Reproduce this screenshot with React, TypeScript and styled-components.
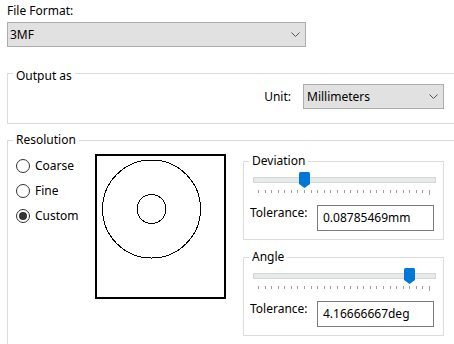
import React from "react";
import styled, { createGlobalStyle } from "styled-components";

const Global = createGlobalStyle`
  html, body { margin: 0; padding: 0; background: #fff; overflow: hidden; }
  body {
    font-family: "Noto Sans", "Open Sans", sans-serif;
    font-size: 12px;
    color: #000;
  }
  * { box-sizing: border-box; }
`;

const Page = styled.div`
  width: 454px;
  height: 344px;
  padding: 3px 0 0 7px;
  display: flex;
  flex-direction: column;
`;

const FieldLabel = styled.div`
  line-height: 16px;
  height: 16px;
`;

const Combo = styled.div<{ $width: number; $top?: number; $padLeft: number }>`
  width: ${(p) => p.$width}px;
  height: 25px;
  margin-top: ${(p) => p.$top ?? 0}px;
  background: #e1e1e1;
  border: 1px solid #adadad;
  display: flex;
  align-items: center;
  justify-content: space-between;
  padding: 0 5px 0 ${(p) => p.$padLeft}px;
  line-height: 16px;
  flex-shrink: 0;
`;

const ComboText = styled.span`
  white-space: nowrap;
`;

const Chevron = () => (
  <svg width="9" height="5" viewBox="0 0 9 5" style={{ display: "block" }}>
    <polyline points="0.5,0.5 4.5,4.5 8.5,0.5" fill="none" stroke="#555" strokeWidth="1" />
  </svg>
);

const ComboBox: React.FC<{ text: string; width: number; top?: number; padLeft: number }> = ({
  text,
  width,
  top,
  padLeft,
}) => (
  <Combo $width={width} $top={top} $padLeft={padLeft}>
    <ComboText>{text}</ComboText>
    <Chevron />
  </Combo>
);

const Group = styled.div<{ $mt?: number; $openRight?: boolean; $openBottom?: boolean; $height?: number }>`
  position: relative;
  margin-top: ${(p) => p.$mt ?? 0}px;
  border: 1px solid #dcdcdc;
  ${(p) => (p.$openRight ? "border-right: none;" : "")}
  ${(p) => (p.$openBottom ? "border-bottom: none;" : "")}
  ${(p) => (p.$height ? `height: ${p.$height}px;` : "")}
  flex-shrink: 0;
`;

const Caption = styled.span<{ $top: number; $left: number }>`
  position: absolute;
  top: ${(p) => p.$top}px;
  left: ${(p) => p.$left}px;
  padding: 0 3px;
  background: #fff;
  line-height: 16px;
  white-space: nowrap;
`;

const UnitRow = styled.div`
  display: flex;
  justify-content: flex-end;
  align-items: center;
  gap: 12px;
  padding: 10px 10px 14px 0;
`;

const ResBody = styled.div`
  display: flex;
  align-items: flex-start;
  padding: 13px 10px 0 8px;
`;

const RadioList = styled.div`
  width: 79px;
  margin-top: -1px;
  display: flex;
  flex-direction: column;
  flex-shrink: 0;
`;

const RadioRow = styled.div`
  height: 25px;
  display: flex;
  align-items: center;
  gap: 5px;
  line-height: 16px;
`;

const RadioCircle = styled.span<{ $checked?: boolean }>`
  width: 14px;
  height: 14px;
  border-radius: 50%;
  border: 1px solid #333;
  background: #fff;
  display: flex;
  align-items: center;
  justify-content: center;
  flex-shrink: 0;
  &::after {
    content: "";
    display: ${(p) => (p.$checked ? "block" : "none")};
    width: 8px;
    height: 8px;
    border-radius: 50%;
    background: #333;
  }
`;

const Preview = styled.div`
  width: 131px;
  height: 145px;
  border: 2px solid #000;
  flex-shrink: 0;
`;

const RightCol = styled.div`
  width: 201px;
  margin-left: 17px;
  margin-top: 7px;
  display: flex;
  flex-direction: column;
  gap: 17px;
  flex-shrink: 0;
`;

const SubGroup = styled.div`
  position: relative;
  border: 1px solid #dcdcdc;
  padding: 10px 0 8px 0;
`;

const SliderBox = styled.div`
  position: relative;
  height: 17px;
  margin: 0 7px 0 9px;
  padding-top: 5px;
`;

const Track = styled.div`
  height: 6px;
  background: #e7eaea;
  border: 1px solid #d6d6d6;
`;

const Thumb = styled.svg<{ $pos: number }>`
  position: absolute;
  top: 0;
  left: ${(p) => p.$pos - 5.5}px;
  display: block;
`;

const Ticks = styled.svg`
  display: block;
  margin: 1px 0 0 9px;
`;

const TolRow = styled.div`
  display: flex;
  justify-content: space-between;
  align-items: flex-start;
  margin-top: 10px;
  padding: 0 9px 0 6px;
`;

const TolLabel = styled.span`
  line-height: 16px;
`;

const TolInput = styled.div`
  width: 117px;
  height: 26px;
  border: 1px solid #7a7a7a;
  background: #fff;
  padding: 0 0 0 5px;
  display: flex;
  align-items: center;
  line-height: 16px;
  white-space: nowrap;
`;

const TRACK_W = 183;

const Slider: React.FC<{ pos: number }> = ({ pos }) => {
  const ticks = Array.from({ length: 27 }, (_, i) => 5 + (i * 171) / 26);
  return (
    <>
      <SliderBox>
        <Track />
        <Thumb $pos={pos} width="11" height="16" viewBox="0 0 11 16">
          <path d="M1.5 0 H9.5 Q11 0 11 1.5 V12 L5.5 16 L0 12 V1.5 Q0 0 1.5 0 Z" fill="#0078d7" />
        </Thumb>
      </SliderBox>
      <Ticks width={TRACK_W} height="5" viewBox={`0 0 ${TRACK_W} 5`}>
        {ticks.map((x, i) => (
          <rect
            key={i}
            x={Math.round(x)}
            y={i === ticks.length - 1 ? 0 : 0}
            width="1"
            height={i === ticks.length - 1 ? 5 : 3}
            fill="#a0a0a0"
          />
        ))}
      </Ticks>
    </>
  );
};

const ToleranceGroup: React.FC<{ title: string; pos: number; value: string }> = ({ title, pos, value }) => (
  <SubGroup>
    <Caption $top={-9} $left={5}>
      {title}
    </Caption>
    <Slider pos={pos} />
    <TolRow>
      <TolLabel>Tolerance:</TolLabel>
      <TolInput>{value}</TolInput>
    </TolRow>
  </SubGroup>
);

export default function App() {
  return (
    <>
      <Global />
      <Page>
        <FieldLabel>File Format:</FieldLabel>
        <ComboBox text="3MF" width={299} top={3} padLeft={2} />

        <Group $mt={26} $openRight>
          <Caption $top={-6} $left={5}>
            Output as
          </Caption>
          <UnitRow>
            <span>Unit:</span>
            <ComboBox text="Millimeters" width={141} padLeft={3} />
          </UnitRow>
        </Group>

        <Group $mt={16} $openRight $openBottom $height={204}>
          <Caption $top={-9} $left={5}>
            Resolution
          </Caption>
          <ResBody>
            <RadioList>
              <RadioRow>
                <RadioCircle />
                <span>Coarse</span>
              </RadioRow>
              <RadioRow>
                <RadioCircle />
                <span>Fine</span>
              </RadioRow>
              <RadioRow>
                <RadioCircle $checked />
                <span>Custom</span>
              </RadioRow>
            </RadioList>
            <Preview>
              <svg width="127" height="141" viewBox="0 0 127 141" style={{ display: "block" }}>
                <circle cx="54.5" cy="53" r="49" fill="none" stroke="#000" strokeWidth="1" shapeRendering="crispEdges" />
                <circle cx="54.5" cy="53" r="14.5" fill="none" stroke="#000" strokeWidth="1" shapeRendering="crispEdges" />
              </svg>
            </Preview>
            <RightCol>
              <ToleranceGroup title="Deviation" pos={51} value="0.08785469mm" />
              <ToleranceGroup title="Angle" pos={156} value="4.16666667deg" />
            </RightCol>
          </ResBody>
        </Group>
      </Page>
    </>
  );
}
